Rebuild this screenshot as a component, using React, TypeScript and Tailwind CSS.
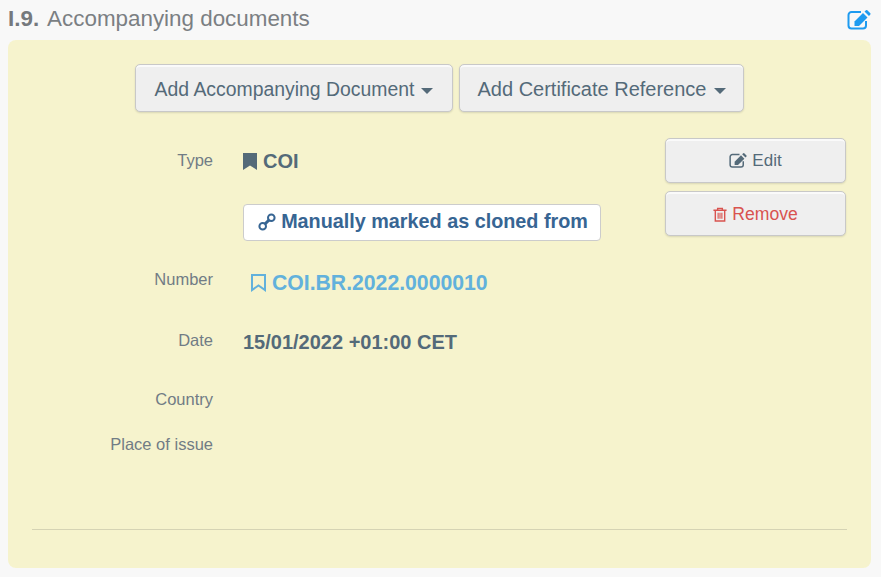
const btn =
  "rounded-[5px] border border-[#c8c8c8] bg-[#efefef] text-[#546a79] shadow-[inset_0_2px_0_#fafafa,0_1px_2px_rgba(0,0,0,0.12)]";

function Caret() {
  return <span className="ml-[7px] inline-block border-x-[6px] border-t-[6px] border-x-transparent border-t-[#546a79] align-middle" />;
}

function EditIcon({ className }: { className: string }) {
  return (
    <svg viewBox="0 0 24 20" className={className} fill="none">
      <path d="M14 2H4.500A3 3 0 0 0 1.500 5v10.500a3 3 0 0 0 3 3H16a3 3 0 0 0 3-3V11" stroke="currentColor" strokeWidth="2" />
      <path d="M7.500 11.500 16 3l4.500 4.500L12 16H7.500Z" fill="currentColor" />
      <path d="M17.500 1.500 19 .3a1 1 0 0 1 1.300 0l3 3a1 1 0 0 1 0 1.300L22 6Z" fill="currentColor" />
    </svg>
  );
}

function TrashIcon({ className }: { className: string }) {
  return (
    <svg viewBox="0 0 14 16" className={className} fill="none" stroke="currentColor">
      <path d="M0 3.500h14M4.500 3V1.500h5V3" strokeWidth="1.500" />
      <path d="M2 3.500V15h10V3.500" strokeWidth="1.500" />
      <path d="M5 6v6.500M7 6v6.500M9 6v6.500" strokeWidth="1.200" />
    </svg>
  );
}

function Row({
  label,
  labelClass = "pb-[2px]",
  className,
  children,
}: {
  label?: string;
  labelClass?: string;
  className: string;
  children?: React.ReactNode;
}) {
  return (
    <div className={`flex items-center gap-[30px] ${className}`}>
      <div className={`w-[181px] text-right text-[16.500px] text-[#717c85] ${labelClass}`}>{label}</div>
      <div className="min-w-0 flex-1">{children}</div>
    </div>
  );
}

export default function App() {
  return (
    <div className="h-[577px] w-[881px] overflow-hidden bg-[#f8f8f8] font-['Liberation_Sans',sans-serif]">
      {/* Section title */}
      <div className="flex h-[40px] items-start justify-between pl-2 pr-[10px] pt-[5px]">
        <h2 className="text-[22.400px] leading-[27px] text-[#7b7f83]">
          <b className="mr-[3px] text-[#75797d]">I.9.</b> Accompanying documents
        </h2>
        <EditIcon className="mt-[5px] h-[20px] w-[24px] text-[#1e9bf0]" />
      </div>

      <section className="ml-2 h-[528px] w-[863px] rounded-[8px] bg-[#f6f3cd] px-6 pt-6">
        <div className="flex justify-center gap-[6px]">
          <button className={`${btn} h-[48px] w-[318px] pt-[3px] text-[19.400px]`}>
            Add Accompanying Document
            <Caret />
          </button>
          <button className={`${btn} h-[48px] w-[285px] pt-[2px] text-[20px]`}>
            Add Certificate Reference
            <Caret />
          </button>
        </div>

        <div className="mt-[26px] flex h-[392px] border-b border-[#d5d3b4]">
          <div className="flex-1">
            <Row label="Type" className="h-[46px]">
              <span className="flex items-center gap-[6px] text-[20px] font-bold text-[#546a79]">
                <svg viewBox="0 0 14 17" className="h-[17px] w-[14px]" fill="currentColor">
                  <path d="M0 0h14v17l-7-4.500L0 17Z" />
                </svg>
                COI
              </span>
            </Row>
            <Row className="mt-[20px] h-[37px]">
              <span className="inline-flex h-[37px] w-[358px] items-center justify-center gap-[5px] rounded-[4px] border border-[#cccccc] bg-white pb-[1px] pl-[2px] text-[19.800px] font-bold text-[#376593]">
                <svg viewBox="0 0 18 18" className="h-[18px] w-[18px]" fill="none" stroke="currentColor">
                  <circle cx="4.700" cy="13.300" r="3.300" strokeWidth="2" />
                  <circle cx="13.300" cy="4.700" r="3.300" strokeWidth="2" />
                  <path d="M6.500 11.500 11.500 6.500" strokeWidth="3" />
                </svg>
                Manually marked as cloned from
              </span>
            </Row>
            <Row label="Number" labelClass="pb-[8px]" className="mt-[22px] h-[40px]">
              <span className="ml-[8px] flex items-center gap-[6px] text-[21.200px] font-bold text-[#62b1dc]">
                <svg viewBox="0 0 15 18" className="h-[18px] w-[15px]" fill="none" stroke="currentColor" strokeWidth="2">
                  <path d="M1 1h13v15l-6.500-4.500L1 16Z" />
                </svg>
                COI.BR.2022.0000010
              </span>
            </Row>
            <Row label="Date" labelClass="pb-[4px]" className="mt-[19px] h-[40px]">
              <span className="text-[20px] font-bold text-[#546a79]">15/01/2022 +01:00 CET</span>
            </Row>
            <Row label="Country" className="mt-[18px] h-[40px]" />
            <Row label="Place of issue" className="mt-[5px] h-[40px]" />
          </div>

          <div className="mr-px flex w-[181px] flex-col gap-2">
            <button className={`${btn} flex h-[45px] items-center justify-center gap-[5px] text-[17px]`}>
              <EditIcon className="h-[15px] w-[18px]" />
              Edit
            </button>
            <button className={`${btn} flex h-[45px] items-center justify-center gap-[5px] pt-[1px] text-[17.600px] !text-[#d9534f]`}>
              <TrashIcon className="h-[15px] w-[14px]" />
              Remove
            </button>
          </div>
        </div>
      </section>
    </div>
  );
}
